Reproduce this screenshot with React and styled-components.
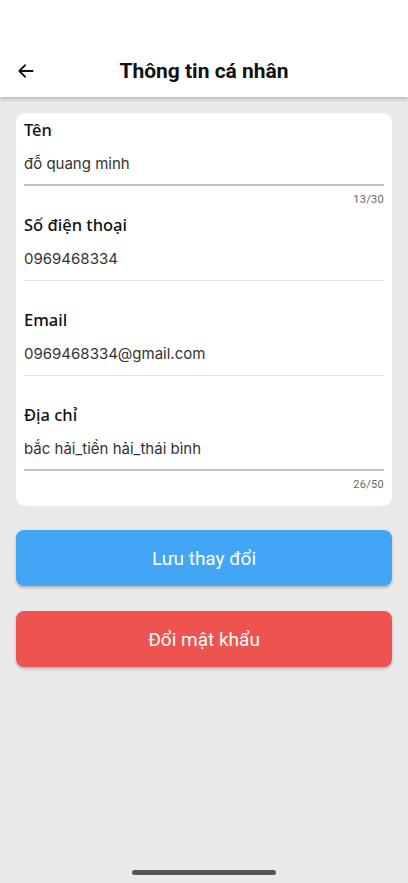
import React, { useState } from 'react';
import styled, { createGlobalStyle } from 'styled-components';

const GlobalStyle = createGlobalStyle`
  html, body {
    margin: 0;
    padding: 0;
    background: #e9e9e9;
  }
  * { box-sizing: border-box; }
`;

const Page = styled.div`
  width: 408px;
  min-height: 883px;
  background: #e9e9e9;
  display: flex;
  flex-direction: column;
  position: relative;
  font-family: Inter, "Noto Sans", sans-serif;
`;

const Header = styled.header`
  background: #fff;
  padding-top: 45px;
  box-shadow: 0 2px 4px rgba(0, 0, 0, 0.22);
  position: relative;
  z-index: 1;
`;

const Bar = styled.div`
  height: 52px;
  display: flex;
  align-items: center;
  justify-content: center;
  position: relative;
`;

const BackButton = styled.button`
  position: absolute;
  left: 12px;
  top: 50%;
  transform: translateY(-50%);
  border: none;
  background: none;
  padding: 4px;
  display: flex;
  cursor: pointer;
`;

const Title = styled.h1`
  margin: 0;
  font-family: Roboto, sans-serif;
  font-weight: 700;
  font-size: 21px;
  color: #111;
`;

const Content = styled.main`
  padding: 16px 16px 0;
  display: flex;
  flex-direction: column;
`;

const Card = styled.section`
  background: #fff;
  border-radius: 9px;
  padding: 5px 8px 8px;
  display: flex;
  flex-direction: column;
`;

const Field = styled.div`
  display: flex;
  flex-direction: column;
`;

const Label = styled.label`
  font-family: "Noto Sans", Roboto, sans-serif;
  font-size: 16.5px;
  font-weight: 500;
  line-height: 24px;
  color: #111;
`;

const Input = styled.input`
  height: 44px;
  border: none;
  border-bottom: ${(p) => (p.$strong ? '2px solid #c2c2c2' : '1px solid #e3e3e3')};
  outline: none;
  padding: 0;
  font-family: Inter, "Noto Sans", sans-serif;
  font-size: 15px;
  color: #333;
  background: transparent;
`;

const Helper = styled.div`
  height: 27px;
  display: flex;
  align-items: center;
  justify-content: flex-end;
  font-family: Roboto, sans-serif;
  font-size: 11px;
  color: #666;
  letter-spacing: 0.3px;
`;

const Actions = styled.div`
  margin-top: 24px;
  display: flex;
  flex-direction: column;
  gap: 25px;
`;

const Button = styled.button`
  height: 56px;
  border: none;
  border-radius: 8px;
  background: ${(p) => p.$color};
  color: #fff;
  font-family: Roboto, sans-serif;
  font-size: 19px;
  box-shadow: 0 2px 3px rgba(0, 0, 0, 0.22);
  cursor: pointer;
`;

const HomeIndicator = styled.div`
  position: absolute;
  left: 132px;
  bottom: 8px;
  width: 144px;
  height: 5px;
  border-radius: 3px;
  background: #555;
`;

const fields = [
  { key: 'name', label: 'Tên', value: 'đỗ quang minh', max: 30 },
  { key: 'phone', label: 'Số điện thoại', value: '0969468334' },
  { key: 'email', label: 'Email', value: '0969468334@gmail.com' },
  { key: 'address', label: 'Địa chỉ', value: 'bắc hải_tiền hải_thái bình', max: 50 },
];

const App = () => {
  const [values, setValues] = useState(
    Object.fromEntries(fields.map((f) => [f.key, f.value]))
  );

  return (
    <Page>
      <GlobalStyle />
      <Header>
        <Bar>
          <BackButton aria-label="Quay lại">
            <svg width="20" height="20" viewBox="0 0 24 24" fill="none" stroke="#111" strokeWidth="2.2" strokeLinecap="round" strokeLinejoin="round">
              <path d="M20 12H4M11 5l-7 7 7 7" />
            </svg>
          </BackButton>
          <Title>Thông tin cá nhân</Title>
        </Bar>
      </Header>
      <Content>
        <Card>
          {fields.map((f) => (
            <Field key={f.key}>
              <Label>{f.label}</Label>
              <Input
                $strong={!!f.max}
                value={values[f.key]}
                maxLength={f.max}
                onChange={(e) => setValues({ ...values, [f.key]: e.target.value })}
              />
              <Helper>{f.max ? `${values[f.key].length}/${f.max}` : ''}</Helper>
            </Field>
          ))}
        </Card>
        <Actions>
          <Button $color="#42a5f5">Lưu thay đổi</Button>
          <Button $color="#ef5350">Đổi mật khẩu</Button>
        </Actions>
      </Content>
      <HomeIndicator />
    </Page>
  );
};

export default App;
